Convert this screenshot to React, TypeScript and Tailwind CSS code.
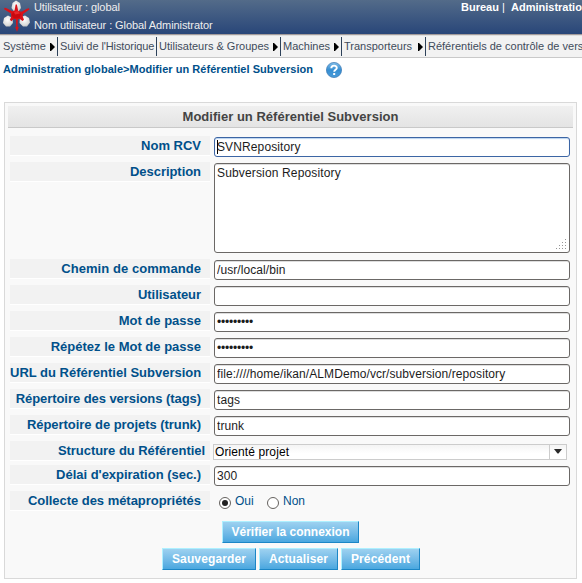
import type { ReactNode } from "react";

const menu = [
  { label: "Système", arrow: true, width: "w-[58px]" },
  { label: "Suivi de l'Historique", arrow: false, width: "w-[99px]" },
  { label: "Utilisateurs & Groupes", arrow: true, width: "w-[124px]" },
  { label: "Machines", arrow: true, width: "w-[61px]" },
  { label: "Transporteurs", arrow: true, width: "w-[84px]" },
];

function Logo() {
  return (
    <svg width="32" height="34" viewBox="0 0 32 34" className="block shrink-0">
      <defs>
        <radialGradient id="ball" cx="0.45" cy="0.4" r="0.8">
          <stop offset="0" stopColor="#ffffff" />
          <stop offset="0.6" stopColor="#dbdbda" />
          <stop offset="1" stopColor="#a0a3a6" />
        </radialGradient>
      </defs>
      <path d="M12.500 3 16 0.500 20 3 21 8 18.500 11.500 14 11.500 11.500 8Z" fill="url(#ball)" />
      <path d="M4 18 8 15.500 12.500 18 13 23 10 26.500 6 26.500 3 23Z" fill="url(#ball)" />
      <path d="M20 17.500 25 15.500 29 18 30 22.500 27 26.500 23 26.500 19.500 23Z" fill="url(#ball)" />
      <path d="M15.600 4.500h1.300l1.300 6.500 3.300.8 5.500-3 2-.6.400 1.400-6.400 4.400-.3 2.400 1.300 3.300-1.500 1.300-3-2.200-1.600.6-.3 7.400 1.200.3-1.800 4.700-1.800-4.500 1.100-.5-.4-7.400-1.600-.6-3 2.400-1.400-1.500 1.400-3.300-.3-2.800-6.900-4.400.4-1.400 2.200.5 5.600 3 2.300-.8Z" fill="#d91118" />
      <path d="M13 12.500 19 12 21 14 19.500 18 14 18.500 11.500 15Z" fill="#ca080e" />
      <path d="M14 12 18 11 20 13.500 15 14.500Z" fill="#e8282b" />
    </svg>
  );
}

function Row({ label, height = "h-[26px]", wide = false, tracking = "", children }: { label: string; height?: string; wide?: boolean; tracking?: string; children: ReactNode }) {
  return (
    <div className={`flex ${height}`}>
      <div className={`h-[19px] w-[200px] shrink-0 whitespace-nowrap bg-[#f2f2f2] text-right text-[13px] leading-[19px] font-bold text-[#00508a] shadow-[0_1px_0_#ffffff] ${tracking} ${wide ? "pr-[5px]" : "pr-[9px]"}`}>
        {label}
      </div>
      <div className="ml-1 pt-px">{children}</div>
    </div>
  );
}

function Field({ value, tracking = "tracking-[0.1px]" }: { value: string; tracking?: string }) {
  return (
    <input
      type="text"
      defaultValue={value}
      className={`block h-5 w-[356px] rounded-[3px] border border-[#6b6866] bg-white px-[2px] pb-px text-[12px] text-[#1c1c1c] shadow-[inset_0_1px_0_#dddddd] outline-none ${tracking}`}
    />
  );
}

function Action({ width, tracking = "tracking-[0.12px]", children }: { width: string; tracking?: string; children: string }) {
  return (
    <button className={`block h-[22px] ${width} ${tracking} whitespace-nowrap border border-t-[#aef0ff] border-r-[#1c86c6] border-b-[#1c86c6] border-l-[#aef0ff] bg-linear-to-b from-[#9dd1f0] to-[#49a7df] text-[12px] leading-[20px] font-bold text-white`}>
      {children}
    </button>
  );
}

function Radio({ checked = false }: { checked?: boolean }) {
  return (
    <span className="mt-1 flex size-3 items-center justify-center rounded-full border border-[#65625f] bg-white">
      {checked && <span className="size-[6px] rounded-full bg-[#222222]" />}
    </span>
  );
}

export default function App() {
  return (
    <div className="h-[583px] w-[582px] overflow-hidden bg-white font-['Liberation_Sans',Arial,sans-serif]">
      <header className="flex h-[35px] border-b border-[#a39b9b] bg-linear-to-b from-[#536b89] to-[#294679] text-[11px] text-[#eeeeee]">
        <div className="w-[34px] shrink-0">
          <Logo />
        </div>
        <div className="w-[427px] shrink-0 leading-[18px] tracking-[-0.08px]">
          <div className="-mt-[2px]">Utilisateur : global</div>
          <div>Nom utilisateur : Global Administrator</div>
        </div>
        <div className="-mt-[2px] flex shrink-0 leading-[18px] font-bold whitespace-nowrap text-white">
          <span className="w-[41px]">Bureau</span>
          <span className="w-[9px] font-normal">|</span>
          <span>Administration</span>
        </div>
      </header>

      <nav className="flex h-[23px] items-center border-t border-b border-t-[#dedede] border-b-[#c9c9c9] bg-[#f2f2f2] text-[11px] leading-[19px] whitespace-nowrap text-[#3e4b5b]">
        {menu.map((item) => (
          <div key={item.label} className={`flex h-[19px] shrink-0 items-center justify-between border-r border-[#2d4159] pr-[2px] pl-[2px] first:pl-[3px] ${item.arrow ? "" : "tracking-[-0.09px]"} ${item.width}`}>
            <span>{item.label}</span>
            {item.arrow && (
              <svg width="5" height="8" viewBox="0 0 5 8" className="shrink-0">
                <path d="M0 0h1l4 4-4 4H0z" fill="#000" />
              </svg>
            )}
          </div>
        ))}
        <span className="pl-[2px]">Référentiels de contrôle de version</span>
      </nav>

      <div className="flex h-[44px] pl-[3px] text-[11px] leading-[23px] font-bold whitespace-nowrap text-[#00508a]">
        <span className="w-[323px] tracking-[0.04px]">Administration globale&gt;Modifier un Référentiel Subversion</span>
        <svg width="16" height="17" viewBox="0 0 16 17" className="mt-[4px]">
          <defs>
            <linearGradient id="help" x1="0" y1="0" x2="0" y2="1">
              <stop offset="0" stopColor="#82bde8" />
              <stop offset="0.5" stopColor="#368ed2" />
              <stop offset="1" stopColor="#4a9bd8" />
            </linearGradient>
          </defs>
          <circle cx="8" cy="8" r="7.600" fill="url(#help)" stroke="#3b79b3" strokeWidth="0.700" />
          <path d="M5.300 6.200C5.300 2.800 10.800 2.900 10.800 6C10.800 7.800 8.200 7.900 8.200 9.800" fill="none" stroke="#fff" strokeWidth="1.900" />
          <rect x="7.100" y="11" width="2.100" height="2.100" rx="0.500" fill="#fff" />
        </svg>
      </div>

      <main className="ml-1 h-[477px] w-[573px] border border-[#d9d9d9] bg-[#f9f9f9] pt-[3px]">
        <h1 className="ml-[3px] h-[22px] w-[565px] border-b border-[#c9c9c9] bg-linear-to-b from-[#f0f0f0] to-[#e4e4e4] text-center text-[13px] leading-[21px] font-bold tracking-[0.02px] text-[#444444]">
          Modifier un Référentiel Subversion
        </h1>
        <form className="mt-2 ml-[5px]" onSubmit={(event) => event.preventDefault()}>
          <Row label="Nom RCV">
            <div className="flex h-5 w-[356px] items-center rounded-[3px] border border-[#3c65a4] bg-white pl-[2px] text-[12px] tracking-[0.12px] text-[#1c1c1c] shadow-[inset_0_1px_1px_#b9d2ef]">
              <span className="h-[14px] border-l border-black leading-[15px]"><span className="-ml-px">SVNRepository</span></span>
            </div>
          </Row>
          <Row label="Description" height="h-[97px]" tracking="tracking-[-0.05px]">
            <div className="flex h-[90px] w-[356px] items-end justify-between rounded-[3px] border border-[#6b6866] bg-white pr-[2px] pb-[2px] pl-[2px] text-[12px] tracking-[0.15px] text-[#1c1c1c] shadow-[inset_0_1px_0_#dddddd]">
              <span className="self-start pt-[2px] leading-[15px]">Subversion Repository</span>
              <svg width="11" height="11" viewBox="0 0 11 11" fill="#969696">
                <path d="M9 0h1v1H9zM6 3h1v1H6zM9 3h1v1H9zM3 6h1v1H3zM6 6h1v1H6zM9 6h1v1H9zM0 9h1v1H0zM3 9h1v1H3zM6 9h1v1H6zM9 9h1v1H9z" />
              </svg>
            </div>
          </Row>
          <Row label="Chemin de commande" tracking="tracking-[0.06px]"><Field value="/usr/local/bin" tracking="tracking-[0.08px]" /></Row>
          <Row label="Utilisateur" tracking="tracking-[-0.05px]"><Field value="" /></Row>
          <Row label="Mot de passe"><Field value="•••••••••" tracking="tracking-[-0.2px]" /></Row>
          <Row label="Répétez le Mot de passe"><Field value="•••••••••" tracking="tracking-[-0.2px]" /></Row>
          <Row label="URL du Référentiel Subversion"><Field value="file:////home/ikan/ALMDemo/vcr/subversion/repository" tracking="tracking-[0.08px]" /></Row>
          <Row label="Répertoire des versions (tags)" tracking="tracking-[-0.06px]"><Field value="tags" /></Row>
          <Row label="Répertoire de projets (trunk)" tracking="tracking-[-0.05px]"><Field value="trunk" /></Row>
          <Row label="Structure du Référentiel" height="h-[24px]" tracking="tracking-[-0.04px]" wide>
            <div className="mt-[2px] -ml-px flex h-4 w-[354px] border border-[#cccccc] bg-linear-to-b from-[#f4f4f4] to-white to-60% text-[12px] leading-[15px] text-black">
              <span className="w-[335px] pl-px tracking-[0.1px]">Orienté projet</span>
              <span className="flex flex-1 justify-center border-l border-[#cccccc] pt-1">
                <svg width="8" height="5" viewBox="0 0 8 5"><path d="M0 0h8L4.500 4.500h-1z" fill="#292929" /></svg>
              </span>
            </div>
          </Row>
          <Row label="Délai d'expiration (sec.)" tracking="tracking-[-0.02px]"><Field value="300" /></Row>
          <Row label="Collecte des métapropriétés" height="h-[30px]" tracking="tracking-[-0.04px]">
            <div className="flex pt-px pl-[5px] text-[12px] leading-[17px] text-[#00508a]">
              <Radio checked />
              <span className="ml-1 w-8">Oui</span>
              <Radio />
              <span className="ml-1">Non</span>
            </div>
          </Row>
          <div className="flex pl-[212px]"><Action width="w-[137px]" tracking="tracking-[0px]">Vérifier la connexion</Action></div>
          <div className="mt-[5px] flex gap-[3px] pl-[152px]">
            <Action width="w-[94px]">Sauvegarder</Action>
            <Action width="w-[79px]">Actualiser</Action>
            <Action width="w-[79px]">Précédent</Action>
          </div>
        </form>
      </main>
    </div>
  );
}
